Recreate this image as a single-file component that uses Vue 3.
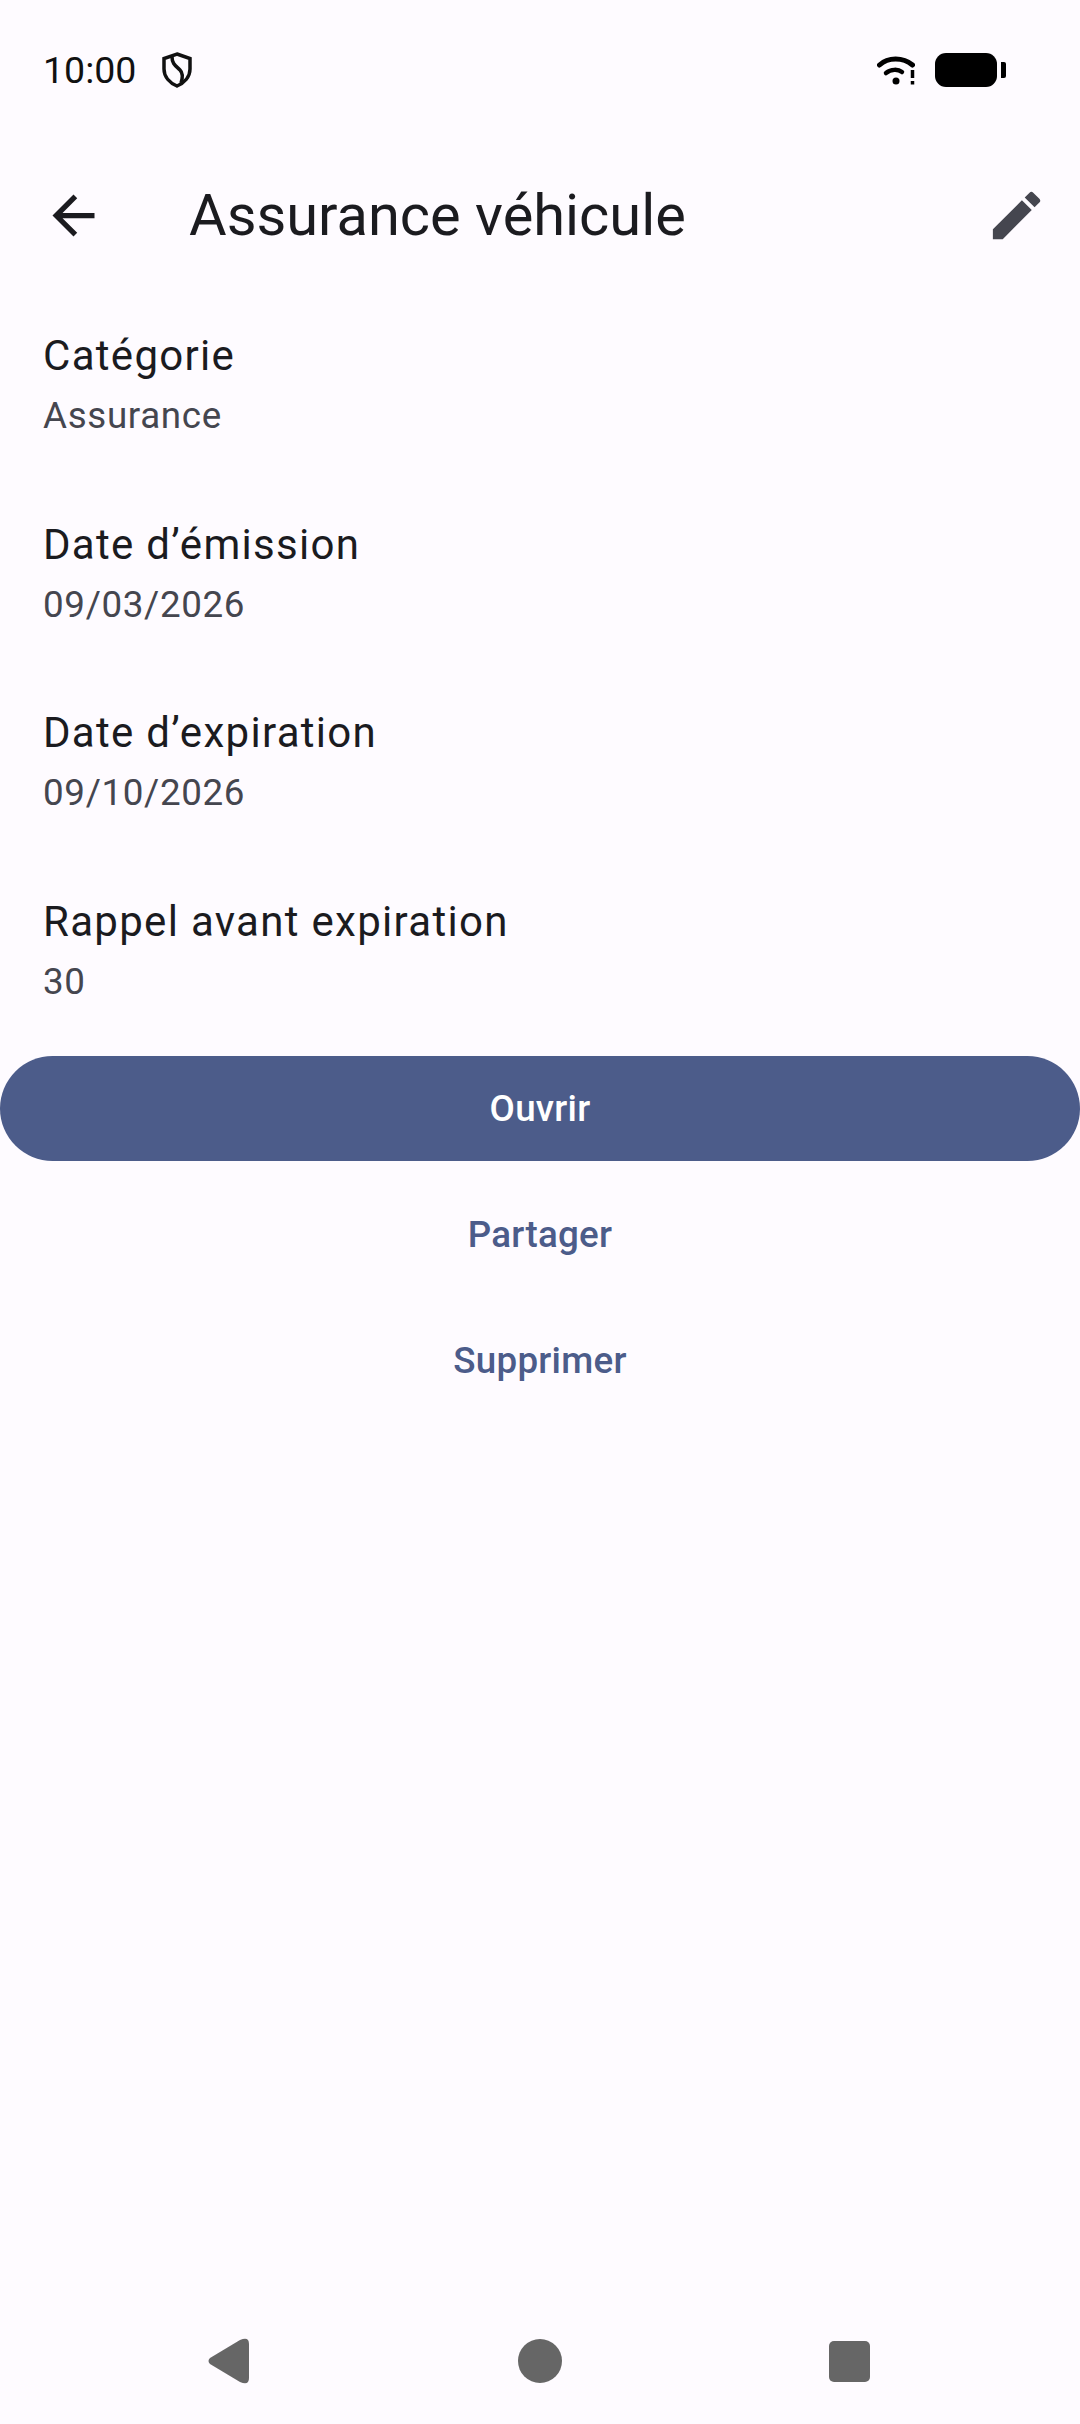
<script setup>
const details = [
  { label: 'Catégorie', value: 'Assurance' },
  { label: 'Date d’émission', value: '09/03/2026' },
  { label: 'Date d’expiration', value: '09/10/2026' },
  { label: 'Rappel avant expiration', value: '30' }
]
</script>

<template>
  <div class="screen">
    <div class="status-bar">
      <span class="time">10:00</span>
      <svg class="shield" width="30" height="36" viewBox="0 0 30 36" fill="none" stroke="#111" stroke-width="3.500">
        <path d="M15 2 L28 6.500 V17 C28 25 22 31 15 34 C8 31 2 25 2 17 V6.500 Z" />
        <path d="M10 5 C10 12 14 14 18 18 C21 21 21 25 19 31" />
      </svg>
      <div class="spacer"></div>
      <svg class="wifi" width="38" height="29" viewBox="0 0 38 29" fill="none" stroke="#000" stroke-linecap="round">
        <path d="M2.500 9 C11 1 26 1 35.500 9" stroke-width="5" />
        <path d="M9 17 C14 13 21 13 25 16" stroke-width="4.500" />
        <circle cx="19" cy="25" r="3.500" fill="#000" stroke="none" />
        <path d="M35.500 14 V22" stroke-width="3.500" stroke-linecap="butt" />
        <path d="M35.500 25 V28.500" stroke-width="3.500" stroke-linecap="butt" />
      </svg>
      <div class="battery"></div>
      <div class="battery-nib"></div>
    </div>

    <header class="top-bar">
      <svg class="icon back" width="63" height="63" viewBox="0 0 24 24" fill="#1b1b1f">
        <path d="M20 11H7.830l5.590-5.590L12 4l-8 8 8 8 1.410-1.410L7.830 13H20v-2z" />
      </svg>
      <h1 class="title">Assurance véhicule</h1>
      <svg class="icon edit" width="63" height="63" viewBox="0 0 24 24" fill="#45464f">
        <path d="M3 17.250V21h3.750L17.810 9.940l-3.750-3.750L3 17.250zM20.710 7.040a1 1 0 0 0 0-1.410l-2.340-2.340a1 1 0 0 0-1.410 0l-1.830 1.830 3.750 3.750 1.830-1.830z" />
      </svg>
    </header>

    <section class="details">
      <div v-for="item in details" :key="item.label" class="row">
        <div class="label">{{ item.label }}</div>
        <div class="value">{{ item.value }}</div>
      </div>
    </section>

    <div class="actions">
      <button class="btn primary">Ouvrir</button>
      <button class="btn text">Partager</button>
      <button class="btn text">Supprimer</button>
    </div>

    <div class="spacer"></div>

    <nav class="nav-bar">
      <svg width="42" height="46" viewBox="0 0 42 46" fill="#666">
        <path d="M2 20 L32 2 Q41 -2 41 6 V40 Q41 48 32 44 L2 26 Q-1 23 2 20 Z" />
      </svg>
      <div class="nav-home"></div>
      <div class="nav-recent"></div>
    </nav>
  </div>
</template>

<style scoped>
.screen {
  width: 1080px;
  height: 2424px;
  background: #fefbff;
  display: flex;
  flex-direction: column;
  font-family: Roboto, "Liberation Sans", sans-serif;
  color: #1b1b1f;
  overflow: hidden;
}

.spacer {
  flex: 1;
}

.status-bar {
  height: 131px;
  box-sizing: border-box;
  padding: 9px 74px 0 43px;
  display: flex;
  align-items: center;
}

.time {
  font-size: 37.500px;
  color: #111;
}

.shield {
  margin-left: 26px;
}

.wifi {
  margin-right: 20px;
}

.battery {
  width: 62px;
  height: 34px;
  border-radius: 11px;
  background: #000;
}

.battery-nib {
  width: 5px;
  height: 16px;
  margin-left: 4px;
  background: #000;
  border-radius: 0 2px 2px 0;
}

.top-bar {
  height: 168px;
  display: flex;
  align-items: center;
  padding: 0 32px 0 42px;
}

.icon {
  flex: none;
}

.title {
  flex: 1;
  margin: 0 0 0 84px;
  font-size: 57.750px;
  font-weight: 400;
  line-height: 74px;
}

.details {
  padding-top: 25px;
}

.row {
  height: 188.500px;
  padding-left: 43px;
}

.label {
  font-size: 42px;
  line-height: 63px;
  letter-spacing: 1.300px;
}

.value {
  margin-top: 3px;
  font-size: 36.750px;
  line-height: 52.500px;
  letter-spacing: 0.660px;
  color: #45464f;
}

.actions {
  display: flex;
  flex-direction: column;
  gap: 21px;
  margin-top: -22px;
}

.btn {
  height: 105px;
  border: none;
  background: transparent;
  font-family: inherit;
  font-size: 36.750px;
  font-weight: 500;
  letter-spacing: 0.260px;
  color: #4c5c8a;
  padding: 0;
}

.primary {
  background: #4c5c8a;
  color: #fff;
  border-radius: 53px;
}

.nav-bar {
  height: 126px;
  display: flex;
  align-items: center;
  justify-content: space-between;
  padding: 0 210px 0 208px;
  box-sizing: border-box;
}

.nav-home {
  width: 44px;
  height: 44px;
  border-radius: 50%;
  background: #666;
}

.nav-recent {
  width: 41px;
  height: 41px;
  border-radius: 5px;
  background: #666;
}
</style>

<style>
html, body {
  margin: 0;
  background: #fefbff;
}
</style>
